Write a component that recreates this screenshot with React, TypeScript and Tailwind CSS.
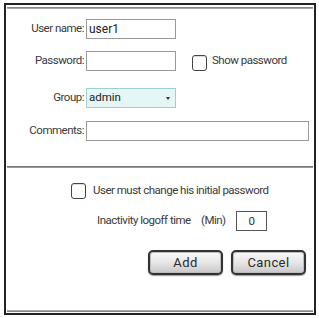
import React from "react";

function Label({ children }: { children: React.ReactNode }) {
  return <div className="w-[80px] shrink-0 text-right pr-[2px]">{children}</div>;
}

function Box({ className = "" }: { className?: string }) {
  return (
    <span
      className={
        "block w-[15px] h-[16px] rounded-[3px] border-[1.5px] border-[#444] bg-white shadow-[inset_0_1px_1px_rgba(0,0,0,0.15)] " +
        className
      }
    />
  );
}

function Btn({ label }: { label: string }) {
  return (
    <button className="w-[75px] h-[25px] rounded-[5px] border-2 border-[#333] bg-gradient-to-b from-[#fafafa] via-[#e6e6e6] to-[#c8c8c8] shadow-[inset_0_0_0_1px_#bdbdbd,0_1px_1px_rgba(0,0,0,0.4)] text-[13px] leading-none text-[#2a2a2a] tracking-[0.4px]">
      {label}
    </button>
  );
}

export default function App() {
  return (
    <div className="w-[319px] h-[318px] bg-white overflow-hidden font-['Roboto','Liberation_Sans',sans-serif] text-[11.5px] tracking-[-0.5px] text-[#3a3a3a]">
      <div className="ml-[4px] mt-[3px] w-[312px] h-[312px] border-2 border-[#222] flex flex-col">
        <div className="mt-[2px] mx-[1px] h-[2px] bg-gradient-to-b from-[#777] to-[#bbb]" />

        <div className="flex items-center mt-[10px] h-[20px]">
          <Label>User name:</Label>
          <div className="w-[90px] h-[20px] border border-[#9a9a9a] px-[2px] leading-[18px] text-[12px] tracking-normal text-[#222]">
            user1
          </div>
        </div>

        <div className="flex items-center mt-[12px] h-[20px]">
          <Label>Password:</Label>
          <div className="w-[90px] h-[20px] border border-[#9a9a9a]" />
          <Box className="ml-[16px] mt-[3px]" />
          <span className="ml-[5px] mt-[-1px]">Show password</span>
        </div>

        <div className="flex items-center mt-[17px] h-[20px]">
          <Label>Group:</Label>
          <div className="w-[90px] h-[20px] border border-[#9fcfcf] bg-[#e4f6f6] flex items-center justify-between pl-[2px] pr-[5px] text-[11.5px] tracking-normal text-[#222]">
            <span>admin</span>
            <span className="w-0 h-0 border-l-[2.5px] border-r-[2.5px] border-t-[3px] border-l-transparent border-r-transparent border-t-[#333]" />
          </div>
        </div>

        <div className="flex items-center mt-[13px] h-[20px]">
          <Label>Comments:</Label>
          <div className="w-[223px] h-[20px] border border-[#9a9a9a]" />
        </div>

        <div className="mt-[25px] mx-[1px] h-[2px] bg-gradient-to-b from-[#666] to-[#aaa]" />

        <div className="flex items-center mt-[15px] h-[16px] pl-[65px]">
          <Box />
          <span className="ml-[7px]">User must change his initial password</span>
        </div>

        <div className="flex items-center mt-[12px] h-[20px] pl-[91px]">
          <span className="w-[100px] whitespace-nowrap">Inactivity logoff time</span>
          <span className="ml-[4px] w-[28px] whitespace-nowrap">(Min)</span>
          <div className="ml-[7px] w-[31px] h-[20px] border border-[#555] text-center leading-[18px] text-[#333]">
            0
          </div>
        </div>

        <div className="flex mt-[19px] pl-[142px] gap-[8px]">
          <Btn label="Add" />
          <Btn label="Cancel" />
        </div>

        <div className="mt-auto mb-[1px] mx-[1px] h-[2px] bg-gradient-to-b from-[#bbb] to-[#777]" />
      </div>
    </div>
  );
}
